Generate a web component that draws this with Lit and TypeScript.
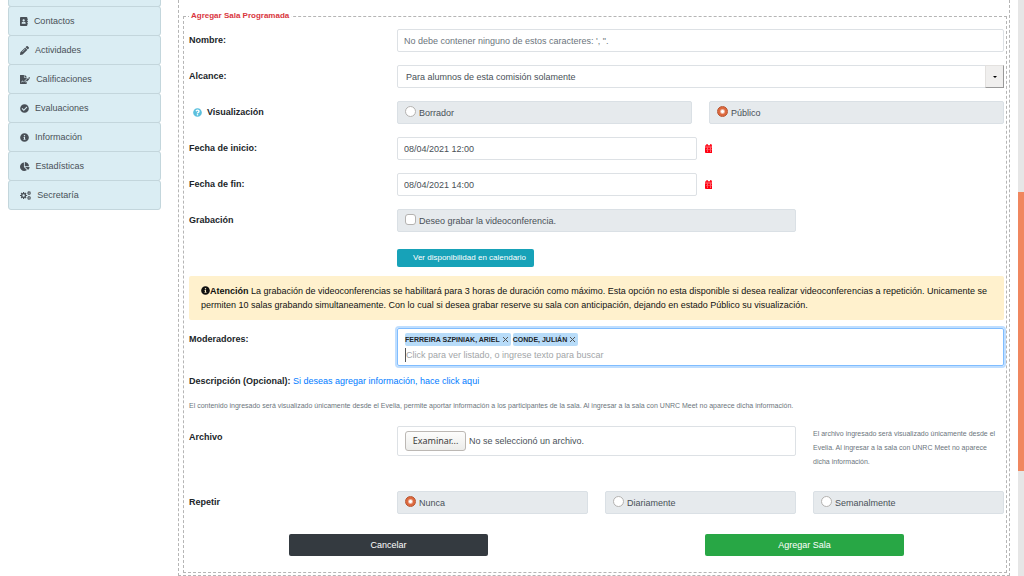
import { LitElement, html, css, svg } from "lit";
import { customElement, property, state, query } from "lit/decorators.js";

/** Outline of a cog wheel with a round hole, for an even-odd fill. */
function cog(cx: number, cy: number, outer: number, inner: number, hole: number, teeth: number): string {
  const points: string[] = [];
  const step = (Math.PI * 2) / teeth;
  for (let i = 0; i < teeth; i++) {
    const a = i * step;
    const corners: [number, number][] = [
      [inner, -0.3],
      [outer, -0.2],
      [outer, 0.2],
      [inner, 0.3],
    ];
    for (const [r, k] of corners) {
      points.push(`${(cx + r * Math.cos(a + k * step)).toFixed(1)} ${(cy + r * Math.sin(a + k * step)).toFixed(1)}`);
    }
  }
  return `M${points.join("L")}ZM${cx - hole} ${cy}a${hole} ${hole} 0 1 0 ${hole * 2} 0a${hole} ${hole} 0 1 0 ${-hole * 2} 0Z`;
}

const ICONS: Record<string, { w: number; d: string }> = {
  contacts: {
    w: 448,
    d: "M436 160c6.6 0 12-5.4 12-12v-40c0-6.600-5.400-12-12-12h-20V48c0-26.500-21.500-48-48-48H48C21.500 0 0 21.500 0 48v416c0 26.500 21.500 48 48 48h320c26.500 0 48-21.500 48-48v-48h20c6.600 0 12-5.400 12-12v-40c0-6.600-5.400-12-12-12h-20v-64h20c6.600 0 12-5.400 12-12v-40c0-6.600-5.400-12-12-12h-20v-64h20zm-228-32c35.300 0 64 28.700 64 64s-28.700 64-64 64-64-28.700-64-64 28.700-64 64-64zm112 236.800c0 10.600-10 19.200-22.400 19.200H118.400C106 384 96 375.400 96 364.800v-19.200c0-31.800 30.100-57.600 67.200-57.600h5c12.300 5.100 25.700 8 39.800 8s27.600-2.900 39.800-8h5c37.100 0 67.200 25.800 67.200 57.600v19.200z",
  },
  pencil: {
    w: 512,
    d: "M497.9 142.1l-46.1 46.1c-4.7 4.7-12.3 4.7-17 0l-111-111c-4.7-4.7-4.7-12.3 0-17l46.1-46.1c18.7-18.7 49.1-18.7 67.9 0l60.1 60.1c18.8 18.7 18.8 49.1 0 67.9zM284.2 99.8L21.6 362.4.4 483.9c-2.9 16.4 11.4 30.6 27.8 27.8l121.5-21.3 262.6-262.6c4.7-4.7 4.7-12.3 0-17l-111-111c-4.8-4.7-12.4-4.7-17.1 0zM124.1 339.9c-5.500-5.500-5.500-14.300 0-19.800l154-154c5.500-5.500 14.300-5.500 19.800 0s5.500 14.300 0 19.800l-154 154c-5.500 5.500-14.300 5.500-19.800 0z",
  },
  signature: {
    w: 576,
    d: "M24 0H224V136c0 13 11 24 24 24H384V200L256 327V384h57L384 314V488c0 13-11 24-24 24H24c-13 0-24-11-24-24V24C0 11 11 0 24 0ZM256 0h6c6 0 12 3 17 7l98 98c4 5 7 11 7 17v6H256ZM64 400c40 0 40-88 72-88 24 0 24 60 44 60 12 0 16-18 32-18v32c-8 0-16 22-36 22-26 0-28-46-40-46-18 0-18 70-72 70ZM288 340 460 170l68 68L358 408H288ZM480 150l24-24c8-8 22-8 30 0l36 36c8 8 8 22 0 30l-24 24Z",
  },
  check: {
    w: 512,
    d: "M504 256c0 136.967-111.033 248-248 248S8 392.967 8 256 119.033 8 256 8s248 111.033 248 248zM227.314 387.314l184-184c6.248-6.248 6.248-16.379 0-22.627l-22.627-22.627c-6.248-6.249-16.379-6.249-22.628 0L216 308.118l-70.059-70.059c-6.248-6.248-16.379-6.248-22.628 0l-22.627 22.627c-6.248 6.248-6.248 16.379 0 22.627l104 104c6.249 6.249 16.379 6.249 22.628.001z",
  },
  info: {
    w: 512,
    d: "M256 8C119.043 8 8 119.083 8 256c0 136.997 111.043 248 248 248s248-111.003 248-248C504 119.083 392.957 8 256 8zm0 110c23.196 0 42 18.804 42 42s-18.804 42-42 42-42-18.804-42-42 18.804-42 42-42zm56 254c0 6.627-5.373 12-12 12h-88c-6.627 0-12-5.373-12-12v-24c0-6.627 5.373-12 12-12h12v-64h-12c-6.627 0-12-5.373-12-12v-24c0-6.627 5.373-12 12-12h64c6.627 0 12 5.373 12 12v100h12c6.627 0 12 5.373 12 12v24z",
  },
  pie: {
    w: 544,
    d: "M527.79 288H290.5l158.03 158.03c6.04 6.04 15.98 6.53 22.19.68 38.7-36.46 65.32-85.61 73.13-140.86 1.34-9.46-6.51-17.85-16.06-17.85zm-15.83-64.8C503.72 103.74 408.26 8.28 288.8.04 279.68-.59 272 7.1 272 16.24V240h223.77c9.14 0 16.82-7.68 16.19-16.8zM224 288V50.71c0-9.55-8.39-17.4-17.84-16.06C86.99 51.49-4.1 155.6.14 280.37 4.5 408.51 114.83 513.59 243.03 511.98c50.4-.63 96.97-16.87 135.26-44.03 7.9-5.6 8.42-17.23 1.57-24.08L224 288z",
  },
  cogs: {
    w: 640,
    d: cog(205, 256, 205, 150, 68, 8) + cog(516, 118, 118, 84, 38, 6) + cog(516, 394, 118, 84, 38, 6),
  },
  question: {
    w: 512,
    d: "M504 256c0 136.997-111.043 248-248 248S8 392.997 8 256C8 119.083 119.043 8 256 8s248 111.083 248 248zM262.655 90c-54.497 0-89.255 22.957-116.549 63.758-3.536 5.286-2.353 12.415 2.715 16.258l34.699 26.31c5.205 3.947 12.621 3.008 16.665-2.122 17.864-22.658 30.113-35.797 57.303-35.797 20.429 0 45.698 13.148 45.698 32.958 0 14.976-12.363 22.667-32.534 33.976C247.128 238.528 216 254.941 216 296v4c0 6.627 5.373 12 12 12h56c6.627 0 12-5.373 12-12v-1.333c0-28.462 83.186-29.647 83.186-106.667 0-58.002-60.165-102-116.531-102zM256 338c-25.365 0-46 20.635-46 46 0 25.364 20.635 46 46 46s46-20.636 46-46c0-25.365-20.635-46-46-46z",
  },
  calendar: {
    w: 448,
    d: "M0 150V112c0-26 22-48 48-48H80V12c0-7 5-12 12-12h50c7 0 12 5 12 12V64H294V12c0-7 5-12 12-12h50c7 0 12 5 12 12V64h32c26 0 48 22 48 48v38ZM0 180H448V464c0 26-22 48-48 48H48c-26 0-48-22-48-48ZM50 320v24H400v-24ZM140 220v84h22v-84ZM286 220v84h22v-84ZM140 360v96h22v-96ZM286 360v96h22v-96Z",
  },
};

@customElement("fa-icon")
export class FaIcon extends LitElement {
  @property() name = "info";

  static styles = css`
    :host {
      display: inline-flex;
      height: 9px;
      flex: none;
    }
    .glyph {
      display: block;
      height: 100%;
      width: auto;
      fill: currentColor;
      fill-rule: evenodd;
    }
  `;

  render() {
    const icon = ICONS[this.name];
    return html`<svg class="glyph" viewBox="0 0 ${icon.w} 512" aria-hidden="true">
      ${svg`<path d=${icon.d}></path>`}
    </svg>`;
  }
}

@customElement("side-menu")
export class SideMenu extends LitElement {
  private items = [
    { icon: "contacts", label: "Contactos" },
    { icon: "pencil", label: "Actividades" },
    { icon: "signature", label: "Calificaciones" },
    { icon: "check", label: "Evaluaciones" },
    { icon: "info", label: "Información" },
    { icon: "pie", label: "Estadísticas" },
    { icon: "cogs", label: "Secretaría" },
  ];

  static styles = css`
    :host {
      display: block;
    }
    .menu {
      list-style: none;
      margin: 0;
      padding: 0;
    }
    .entry {
      box-sizing: border-box;
      background: #daedf3;
      border: 1px solid #c3d6dc;
      border-radius: 3px;
      margin-top: -1px;
    }
    .previous {
      height: 7px;
      margin-top: 0;
      border-top: 0;
      border-top-left-radius: 0;
      border-top-right-radius: 0;
    }
    .link {
      display: flex;
      align-items: center;
      gap: 6px;
      padding: 7px 11px;
      line-height: 14px;
      color: #495057;
      text-decoration: none;
    }
  `;

  render() {
    return html`<nav>
      <ul class="menu">
        <li class="entry previous"></li>
        ${this.items.map(
          (item) => html`<li class="entry">
            <a class="link" href="#"><fa-icon name=${item.icon}></fa-icon>${item.label}</a>
          </li>`
        )}
      </ul>
    </nav>`;
  }
}

@customElement("app-root")
export class AppRoot extends LitElement {
  @state() private visibility = "Público";
  @state() private repeat = "Nunca";
  @state() private fileName = "";
  @state() private moderators = ["FERREIRA SZPINIAK, ARIEL", "CONDE, JULIÁN"];
  @query("#archivo") private fileInput!: HTMLInputElement;

  static styles = css`
    :host {
      display: flex;
      height: 100vh;
      overflow: hidden;
      background: #fff;
      font: 9px/14px "Liberation Sans", Arial, sans-serif;
      color: #212529;
    }
    .page {
      flex: 1;
      min-width: 0;
      display: grid;
      grid-template-columns: 153px 1fr;
      gap: 17px;
      align-items: start;
      padding: 0 8px;
    }
    .scroll {
      display: grid;
      grid-template-rows: 192fr 279fr 105fr;
      width: 6px;
      background: #e6e6e6;
    }
    .thumb {
      grid-row: 2;
      background: #f0875f;
    }
    .panel {
      border: 1px dashed #b5b5b5;
      border-top: 0;
      padding: 10px 2px 2px 4px;
    }
    .room {
      margin: 0;
      min-width: 0;
      border: 1px dashed #b5b5b5;
      padding: 7px 2px 16px 5px;
    }
    .title {
      padding: 0 2px;
      font-size: 8px;
      line-height: 12px;
      font-weight: bold;
      color: #d9363e;
    }
    .row {
      display: grid;
      grid-template-columns: repeat(12, minmax(0, 1fr));
      column-gap: 17px;
      align-items: start;
      margin-bottom: 13px;
    }
    .name {
      grid-column: span 3;
      font-weight: bold;
      padding-top: 4px;
    }
    .help {
      display: flex;
      align-items: center;
      gap: 5px;
      padding-left: 4px;
    }
    .help fa-icon {
      color: #5bc0de;
    }
    .wide {
      grid-column: span 9;
    }
    .half {
      grid-column: span 6;
    }
    .quarter {
      grid-column: span 3;
    }
    .halves {
      display: grid;
      grid-template-columns: 1fr 1fr;
      gap: 17px;
    }
    .dated {
      display: grid;
      grid-template-columns: 1fr 1fr;
      gap: 8px;
      align-items: center;
    }
    .box {
      box-sizing: border-box;
      width: 100%;
      height: 23px;
      margin: 0;
      padding: 0 6px;
      border: 1px solid #dde1e5;
      border-radius: 2px;
      background: #fff;
      color: #495057;
      font: inherit;
    }
    .box::placeholder {
      color: #6c757d;
      opacity: 1;
    }
    .picker {
      display: grid;
      grid-template-columns: 1fr 19px;
    }
    .picker .box {
      grid-area: 1 / 1 / 2 / 3;
      appearance: none;
      padding: 0 8px;
    }
    .arrow {
      grid-area: 1 / 2 / 2 / 3;
      box-sizing: border-box;
      display: grid;
      place-items: center;
      border: 1px solid #e3e1df;
      border-right: 1px solid #999;
      border-bottom: 1px solid #999;
      background: #f0efee;
      pointer-events: none;
    }
    .arrow svg {
      width: 4px;
      height: 2px;
    }
    .choice {
      box-sizing: border-box;
      display: flex;
      align-items: flex-start;
      gap: 3px;
      min-height: 23px;
      padding: 4px 7px 0;
      border: 1px solid #dae0e5;
      border-radius: 2px;
      background: #e6eaed;
      color: #495057;
    }
    .choice span {
      padding-top: 1px;
      line-height: 13px;
    }
    .tick {
      appearance: none;
      box-sizing: border-box;
      flex: none;
      width: 11px;
      height: 11px;
      margin: 0;
      border: 1px solid #b4b2b0;
      border-radius: 3px;
      background: #fff;
    }
    .tick:checked {
      background: #dd6a40;
    }
    .round {
      border-radius: 50%;
    }
    .round:checked {
      border: 1px solid #b9532d;
      background: radial-gradient(circle, #fff 0 1px, #dd6a40 3px);
    }
    .date {
      display: inline-flex;
      justify-self: start;
      padding: 0;
      border: 0;
      background: none;
      color: #f01;
    }
    .btn {
      box-sizing: border-box;
      border: 0;
      border-radius: 2px;
      height: 22px;
      padding: 0;
      color: #fff;
      font: inherit;
    }
    .teal {
      height: 18px;
      padding: 0 8px 0 16px;
      background: #17a2b8;
      font-size: 8px;
    }
    .slot {
      grid-column: 4 / -1;
      display: flex;
      margin-top: 4px;
    }
    .notice {
      margin: -4px 0 8px;
      padding: 8px 12px;
      border-radius: 2px;
      background: #fff1cd;
      color: #111;
    }
    .notice fa-icon {
      vertical-align: -1px;
    }
    .tags {
      box-sizing: border-box;
      border: 1px solid #80bdff;
      border-radius: 2px;
      box-shadow: 0 0 0 2px #bfdeff;
      padding: 4px 7px 3px;
    }
    .chosen {
      display: flex;
      gap: 2px;
    }
    .tag {
      display: flex;
      align-items: center;
      gap: 2px;
      height: 13px;
      padding-right: 2px;
      border-radius: 2px;
      background: #b8dcf9;
      font-size: 7px;
      font-weight: bold;
    }
    .drop {
      display: flex;
      padding: 0;
      border: 0;
      background: none;
    }
    .drop svg {
      width: 7px;
      height: 7px;
    }
    .search {
      display: block;
      box-sizing: border-box;
      width: 100%;
      height: 14px;
      margin-top: 2px;
      padding: 0;
      border: 0;
      border-left: 1px solid #555;
      outline: 0;
      background: none;
      font: inherit;
    }
    .search::placeholder {
      color: #a2a5a8;
      opacity: 1;
    }
    .more {
      margin: -5px 0 11px;
    }
    .more a {
      color: #007bff;
      text-decoration: none;
    }
    .hint {
      margin: 0 0 13px;
      font-size: 7px;
      color: #6c757d;
    }
    .aside {
      margin: 1px 0 9px;
    }
    .upload {
      box-sizing: border-box;
      display: flex;
      align-items: center;
      gap: 3px;
      height: 30px;
      padding: 0 7px;
      border: 1px solid #dde1e5;
      border-radius: 2px;
      color: #495057;
    }
    .browse {
      height: 20px;
      width: 61px;
      padding: 0;
      border: 1px solid #bcb8b4;
      border-radius: 3px;
      background: linear-gradient(#fdfdfc, #ececea);
      color: #3a3a3a;
      font: 9px/14px "Noto Sans", sans-serif;
    }
    .actions {
      display: grid;
      grid-template-columns: 1fr 1fr;
      gap: 17px;
      margin-top: 20px;
    }
    .actions .btn {
      width: 50%;
      justify-self: center;
    }
    .dark {
      background: #343a40;
    }
    .green {
      background: #28a745;
    }
  `;

  private radio(group: string, label: string, current: string, pick: (v: string) => void, extra = "") {
    return html`<label class="choice ${extra}">
      <input
        class="tick round"
        type="radio"
        name=${group}
        .checked=${label === current}
        @change=${() => pick(label)}
      />
      <span>${label}</span>
    </label>`;
  }

  private dateRow(id: string, label: string, value: string) {
    return html`<div class="row">
      <label class="name" for=${id}>${label}</label>
      <div class="wide dated">
        <input class="box" id=${id} type="text" .value=${value} />
        <button class="date" type="button" aria-label="Calendario"><fa-icon name="calendar"></fa-icon></button>
      </div>
    </div>`;
  }

  private removeModerator(name: string) {
    this.moderators = this.moderators.filter((m) => m !== name);
  }

  render() {
    const setVisibility = (v: string) => (this.visibility = v);
    const setRepeat = (v: string) => (this.repeat = v);
    return html`
      <div class="page">
        <side-menu></side-menu>
        <main class="panel">
          <form @submit=${(e: Event) => e.preventDefault()}>
            <fieldset class="room">
              <legend class="title">Agregar Sala Programada</legend>

              <div class="row">
                <label class="name" for="nombre">Nombre:</label>
                <div class="wide">
                  <input
                    class="box"
                    id="nombre"
                    type="text"
                    placeholder="No debe contener ninguno de estos caracteres: ', &quot;."
                  />
                </div>
              </div>

              <div class="row">
                <label class="name" for="alcance">Alcance:</label>
                <div class="wide picker">
                  <select class="box" id="alcance">
                    <option>Para alumnos de esta comisión solamente</option>
                  </select>
                  <span class="arrow"><svg viewBox="0 0 4 2"><path d="M0 0H4L2 2Z" /></svg></span>
                </div>
              </div>

              <div class="row">
                <div class="name help"><fa-icon name="question"></fa-icon>Visualización</div>
                <div class="wide halves">
                  ${["Borrador", "Público"].map((v) => this.radio("visual", v, this.visibility, setVisibility))}
                </div>
              </div>

              ${this.dateRow("inicio", "Fecha de inicio:", "08/04/2021 12:00")}
              ${this.dateRow("fin", "Fecha de fin:", "08/04/2021 14:00")}

              <div class="row">
                <div class="name">Grabación</div>
                <label class="choice half">
                  <input class="tick" type="checkbox" />
                  <span>Deseo grabar la videoconferencia.</span>
                </label>
              </div>

              <div class="row">
                <div class="slot">
                  <button class="btn teal" type="button">Ver disponibilidad en calendario</button>
                </div>
              </div>

              <div class="notice">
                <fa-icon name="info"></fa-icon><b>Atención</b> La grabación de videoconferencias se habilitará para 3
                horas de duración como máximo. Esta opción no esta disponible si desea realizar videoconferencias a
                repetición. Unicamente se permiten 10 salas grabando simultaneamente. Con lo cual si desea grabar
                reserve su sala con anticipación, dejando en estado Público su visualización.
              </div>

              <div class="row">
                <label class="name" for="moderadores">Moderadores:</label>
                <div class="wide tags">
                  <div class="chosen">
                    ${this.moderators.map(
                      (m) => html`<span class="tag"
                        >${m}<button
                          class="drop"
                          type="button"
                          aria-label="Quitar ${m}"
                          @click=${() => this.removeModerator(m)}
                        >
                          <svg viewBox="0 0 7 7"><path d="M1 1 6 6M6 1 1 6" stroke="#555" fill="none" /></svg></button
                      ></span>`
                    )}
                  </div>
                  <input
                    class="search"
                    id="moderadores"
                    type="text"
                    placeholder="Click para ver listado, o ingrese texto para buscar"
                  />
                </div>
              </div>

              <p class="more">
                <b>Descripción (Opcional):</b> <a href="#">Si deseas agregar información, hace click aqui</a>
              </p>
              <p class="hint">
                El contenido ingresado será visualizado únicamente desde el Evelia, permite aportar información a los
                participantes de la sala. Al ingresar a la sala con UNRC Meet no aparece dicha información.
              </p>

              <div class="row">
                <label class="name" for="archivo">Archivo</label>
                <div class="half upload">
                  <button class="browse" type="button" @click=${() => this.fileInput.click()}>Examinar...</button>
                  <input
                    id="archivo"
                    type="file"
                    hidden
                    @change=${() => (this.fileName = this.fileInput.files?.[0]?.name ?? "")}
                  />
                  <span>${this.fileName || "No se seleccionó un archivo."}</span>
                </div>
                <p class="hint quarter aside">
                  El archivo ingresado será visualizado únicamente desde el Evelia. Al ingresar a la sala con UNRC Meet
                  no aparece dicha información.
                </p>
              </div>

              <div class="row">
                <div class="name">Repetir</div>
                ${["Nunca", "Diariamente", "Semanalmente"].map((v) =>
                  this.radio("repetir", v, this.repeat, setRepeat, "quarter")
                )}
              </div>

              <div class="actions">
                <button class="btn dark" type="button">Cancelar</button>
                <button class="btn green" type="submit">Agregar Sala</button>
              </div>
            </fieldset>
          </form>
        </main>
      </div>
      <div class="scroll" aria-hidden="true"><div class="thumb"></div></div>
    `;
  }
}
